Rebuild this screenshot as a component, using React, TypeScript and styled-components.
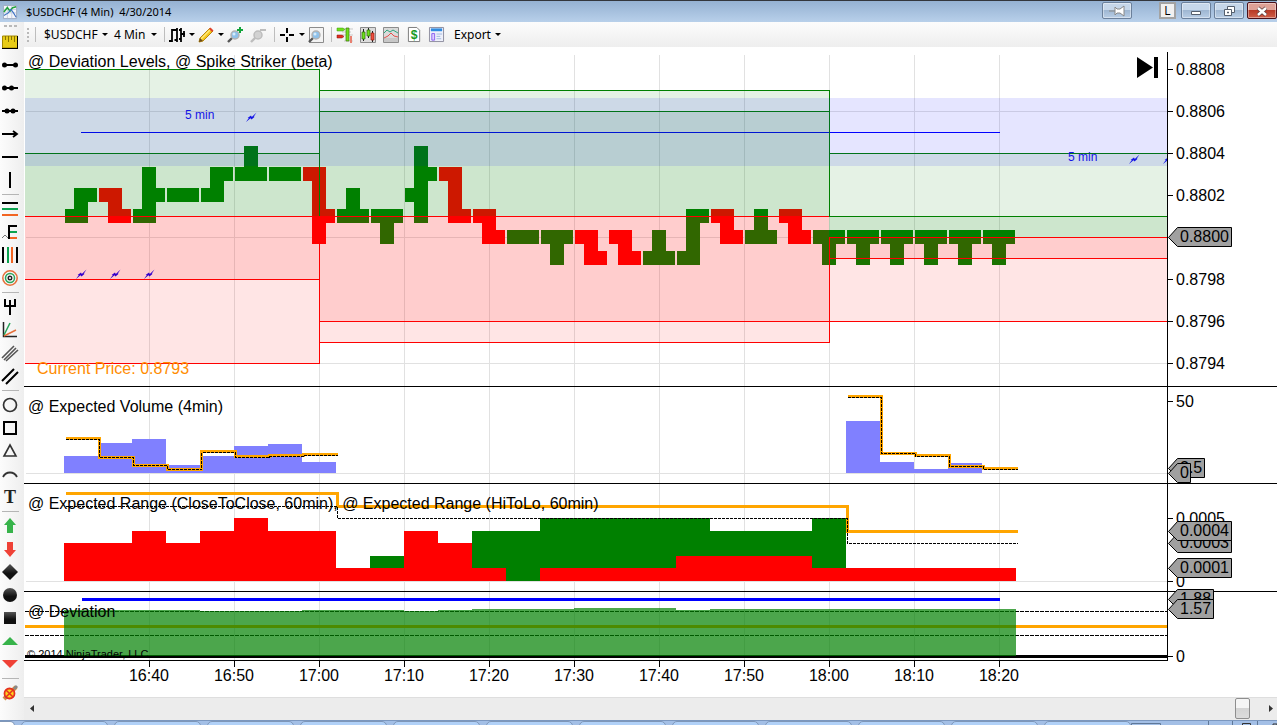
import React from "react";
import styled, { createGlobalStyle } from "styled-components";

const GlobalStyle = createGlobalStyle`
  *, *::before, *::after { box-sizing: border-box; }
  body { margin: 0; background: #fff; font-family: "Open Sans", "Noto Sans", sans-serif; font-size: 12px; color: #000; }
  button { font: inherit; color: inherit; border: 0; padding: 0; margin: 0; background: none; }
  svg { display: block; }
`;

/* ---------- window frame ---------- */

const Page = styled.div`
  display: flex;
  flex-direction: column;
  min-height: 100vh;
`;

const TitleBar = styled.header`
  display: flex;
  align-items: center;
  height: 22px;
  padding-left: 3px;
  border-top: 1px solid #33363c;
  background: linear-gradient(#95b1d2, #b8d0ea);
`;

const Title = styled.h1`
  flex: 1;
  margin: 0 0 0 9px;
  font-family: "Noto Sans", sans-serif;
  font-size: 11px;
  line-height: 20px;
  font-weight: 400;
  white-space: pre;
`;

const WindowButtons = styled.div`
  display: flex;
  gap: 3px;
  height: 21px;
  padding-top: 1px;
`;

const FrameButton = styled.button<{ $close?: boolean }>`
  display: flex;
  align-items: center;
  justify-content: center;
  width: 30px;
  height: 17px;
  border: 1px solid ${(p) => (p.$close ? "#4a1018" : "#6b809b")};
  border-radius: 2px;
  background: ${(p) =>
    p.$close
      ? "linear-gradient(#dea196 0 45%, #b83a26 50%, #cf5f49)"
      : "linear-gradient(#c6d7ea 0 45%, #9fb7d2 50%, #b9cee6)"};
  box-shadow: inset 0 0 0 1px rgba(255, 255, 255, 0.4);
`;

const LinkButton = styled.button`
  width: 17px;
  height: 17px;
  margin: 0 2px 0 24px;
  border: 2px solid #a3a3a3;
  background: #f1f1f1;
  line-height: 13px;
  text-align: center;
`;

const Body = styled.div`
  display: flex;
`;

const Main = styled.main`
  flex: 1;
  min-width: 0;
`;

/* ---------- drawing tools ---------- */

const SideBar = styled.nav`
  display: flex;
  flex-direction: column;
  flex: none;
  width: 24px;
  background: linear-gradient(90deg, #fcfcfc, #eeeeee);
`;

const SideGrip = styled.div`
  display: flex;
  gap: 2px;
  height: 8px;
  padding: 3px 0 0 4px;

  i { width: 3px; height: 2px; background: #b9b9b9; }
`;

const ToolButton = styled.button`
  display: flex;
  align-items: center;
  justify-content: center;
  width: 20px;
  height: 23px;
`;

const SideRule = styled.hr`
  width: 17px;
  height: 2px;
  margin: 2px 0 2px 2px;
  border: 0;
  border-bottom: 1px solid #b5b5b5;
`;

/* ---------- toolbar ---------- */

const ToolBar = styled.div`
  display: flex;
  align-items: center;
  height: 25px;
  padding-left: 3px;
  background: linear-gradient(#fcfcfc, #eeeeee);
`;

const Grip = styled.div`
  display: flex;
  flex-direction: column;
  gap: 2px;
  width: 8px;

  i { width: 2px; height: 2px; background: #b9b9b9; }
`;

const Rule = styled.div<{ $after: number }>`
  width: 1px;
  height: 15px;
  margin-right: ${(p) => p.$after}px;
  background: #bdbdbd;
`;

const ToolbarButton = styled.button<{ $width: number }>`
  display: flex;
  align-items: center;
  flex: none;
  gap: 4px;
  width: ${(p) => p.$width}px;
  height: 22px;
`;

const MenuButton = styled(ToolbarButton)`
  font-family: "Noto Sans", sans-serif;
  font-size: 12px;
  line-height: 20px;
  white-space: nowrap;
  justify-content: space-between;
  padding-right: 7px;
`;

/* ---------- chart ---------- */

const Panel = styled.section`
  display: flex;
  border-bottom: 1px solid #000;
`;

const LastPanel = styled(Panel)`
  border-bottom: 0;
`;

const PlotBox = styled.div`
  position: relative;
  flex: 1;
  min-width: 0;
`;

const LastPlotBox = styled(PlotBox)`
  border-bottom: 1px solid #000;
`;

const Plot = styled.svg<{ $height: number }>`
  width: 100%;
  height: ${(p) => p.$height}px;
  font-family: "Liberation Sans", Arial, sans-serif;
  font-size: 16px;
  shape-rendering: crispEdges;
`;

const AxisBox = styled.svg`
  flex: none;
  width: 110px;
  overflow: visible;
  font-family: "Liberation Sans", Arial, sans-serif;
  font-size: 16px;
  z-index: 1;
`;

const EndButton = styled.button`
  position: absolute;
  top: 10px;
  right: 9px;
`;

const ScrollBar = styled.div`
  display: flex;
  align-items: center;
  height: 23px;
  padding: 0 3px 2px 5px;
  border-top: 1px solid #dedede;
  background: #ececec;
`;

const ScrollArrow = styled.button`
  display: flex;
  align-items: center;
  justify-content: center;
  width: 6px;
  height: 20px;
`;

const Track = styled.div`
  display: flex;
  flex: 1;
  justify-content: flex-end;
  padding-right: 18px;
`;

const Thumb = styled.button`
  width: 15px;
  height: 21px;
  border: 1px solid #8e8e8e;
  border-radius: 2px;
  background: linear-gradient(#f5f5f5 0 45%, #d4d4d4 50%, #dcdcdc);
`;

const TaskBar = styled.footer`
  display: flex;
  justify-content: space-between;
  height: 5px;
  overflow: hidden;
  border-top: 1px solid #7b97bf;
  background: #a3bfe6;
`;

const TaskTabs = styled.div`
  display: flex;
  gap: 6px;
`;

const TaskTab = styled.div<{ $first?: boolean }>`
  width: ${(p) => (p.$first ? 15 : 87)}px;
  height: 12px;
  border: 1px solid #7f97b8;
  border-left-width: ${(p) => (p.$first ? 0 : 1)}px;
  border-radius: ${(p) => (p.$first ? "0 5px 0 0" : "5px 5px 0 0")};
  background: ${(p) => (p.$first ? "#fff" : "#b1d1f8")};
`;

const GREEN = "#008000";
const RED = "#ff0000";
const ORANGE = "#ffa500";
const GRID = "#e1e1e1";

/* 34px per four-minute bar, first bar (16:32) centred at 57px */
const BAR = 34;
const barX = (i: number) => 57 + BAR * i;
const TIMES = ["16:40", "16:50", "17:00", "17:10", "17:20", "17:30", "17:40", "17:50", "18:00", "18:10", "18:20"];
const timeX = (i: number) => 125 + 85 * i;
/* 21px per pip, prices held in pips */
const priceY = (p: number) => 22 + (8808 - p) * 21;

type Bar = [open: number, high: number, low: number, close: number];
const BARS: Bar[] = [
  [8801, 8802, 8801, 8802],
  [8802, 8802, 8801, 8801],
  [8801, 8803, 8801, 8802],
  [8802, 8802, 8802, 8802],
  [8802, 8803, 8802, 8803],
  [8803, 8804, 8803, 8803],
  [8803, 8803, 8803, 8803],
  [8803, 8803, 8800, 8801],
  [8801, 8802, 8801, 8801],
  [8801, 8801, 8800, 8801],
  [8802, 8804, 8801, 8803],
  [8803, 8803, 8801, 8801],
  [8801, 8801, 8800, 8800],
  [8800, 8800, 8800, 8800],
  [8800, 8800, 8799, 8800],
  [8800, 8800, 8799, 8799],
  [8800, 8800, 8799, 8799],
  [8799, 8800, 8799, 8799],
  [8799, 8801, 8799, 8801],
  [8801, 8801, 8800, 8800],
  [8800, 8801, 8800, 8800],
  [8801, 8801, 8800, 8800],
  [8800, 8800, 8799, 8800],
  [8800, 8800, 8799, 8800],
  [8800, 8800, 8799, 8800],
  [8800, 8800, 8799, 8800],
  [8800, 8800, 8799, 8800],
  [8800, 8800, 8799, 8800],
];

interface Zone {
  x: number;
  width: number | string;
  levels: [number, number, number, number, number];
}
const ZONES: Zone[] = [
  { x: 1, width: 294, levels: [8808, 8804, 8801, 8798, 8794] },
  { x: 295, width: 510, levels: [8807, 8806, 8801, 8796, 8795] },
  { x: 805, width: "100%", levels: [8804, 8801, 8800, 8799, 8796] },
];

const VerticalGrid = ({ top = 0 }: { top?: number }) => (
  <g fill={GRID}>
    {TIMES.map((t, i) => (
      <rect key={t} x={timeX(i)} y={top} width={1} height="100%" />
    ))}
  </g>
);

const Ohlc = ({ bar, x }: { bar: Bar; x: number }) => {
  const [o, h, l, c] = bar;
  return (
    <g fill={c < o ? RED : GREEN}>
      <rect x={x - 16} y={priceY(o) - 7} width={9} height={14} />
      <rect x={x - 7} y={priceY(h) - 7} width={14} height={priceY(l) - priceY(h) + 14} />
      <rect x={x + 7} y={priceY(c) - 7} width={9} height={14} />
    </g>
  );
};

const ZoneShade = ({ zone }: { zone: Zone }) => {
  const y = zone.levels.map(priceY);
  const bands: [number, number, string][] = [
    [y[0], y[2], GREEN],
    [y[1], y[2], GREEN],
    [y[2], y[3], RED],
    [y[2], y[4], RED],
  ];
  return (
    <g>
      {bands.map(([a, b, c], i) => (
        <rect key={i} x={zone.x} y={a} width={zone.width} height={b - a} fill={c} fillOpacity={0.1} />
      ))}
      {y.map((v, i) => (
        <rect key={v} x={zone.x} y={v} width={zone.width} height={1} fill={i < 2 ? GREEN : RED} />
      ))}
    </g>
  );
};

const Bolt = ({ x, y, color = "#1414e6" }: { x: number; y: number; color?: string }) => (
  <path
    d={`M${x - 5} ${y + 5}l2.800-4h-1.200l3.400-2.500.8 1.500 4.700-4.500-2.800 4.300h1l-3.200 2.700-1-1.200z`}
    fill={color}
    shapeRendering="auto"
  />
);

const PricePanel = () => (
  <Panel>
    <PlotBox>
      <Plot $height={339} role="img" aria-label="Price">
        <VerticalGrid top={8} />
        {[8806, 8800, 8794].map((p) => (
          <rect key={p} x={2} y={priceY(p)} width="100%" height={1} fill={GRID} />
        ))}
        <rect x={57} y={85} width={919} height={1} fill="#0000ff" />
        {BARS.map((b, i) => (
          <Ohlc key={i} bar={b} x={barX(i)} />
        ))}
        {ZONES.map((z) => (
          <ZoneShade key={z.x} zone={z} />
        ))}
        <rect x={295} y={22} width={1} height={147} fill={GREEN} />
        <rect x={295} y={169} width={1} height={148} fill={RED} />
        <rect x={805} y={43} width={1} height={126} fill={GREEN} />
        <rect x={805} y={190} width={1} height={106} fill={RED} />
        <rect x={1} y={51} width="100%" height={68} fill="#0000ff" fillOpacity={0.1} />
        <text x={161} y={72} fontSize={12} fill="#1414e6">5 min</text>
        <text x={1044} y={114} fontSize={12} fill="#1414e6">5 min</text>
        <Bolt x={227} y={70} />
        <Bolt x={1110} y={112} />
        <Bolt x={1144} y={112} />
        {[0, 1, 2].map((i) => (
          <Bolt key={i} x={barX(i)} y={227} color="#3300cc" />
        ))}
        <text x={13} y={327} fill="#ff8c00">Current Price: 0.8793</text>
        <text x={4} y={20}>@ Deviation Levels, @ Spike Striker (beta)</text>
      </Plot>
      <EndButton aria-label="Go to last bar">
        <svg width={21} height={21}>
          <path d="M0 0l16 10.500-16 10.500zM17 0h4v21h-4z" />
        </svg>
      </EndButton>
    </PlotBox>
    <Axis
      height={339}
      top={5}
      labels={[8808, 8806, 8804, 8802, 8798, 8796, 8794].map((p) => [priceY(p), `0.${p}`])}
      tags={[[priceY(8800), "0.8800", 64]]}
    />
  </Panel>
);

interface AxisProps {
  height: number;
  top?: number;
  labels: [number, string][];
  tags: [number, string, number][];
}
const Axis = ({ height, top = 0, labels, tags }: AxisProps) => (
  <AxisBox height={height}>
    <rect x={0} y={top} width={1} height={height - top} />
    {labels.map(([y, t]) => (
      <g key={t}>
        <rect x={0} y={y} width={6} height={1} />
        <text x={9} y={y + 6}>{t}</text>
      </g>
    ))}
    {tags.map(([y, t, w]) => (
      <g key={t}>
        <path d={`M1.500 ${y + 0.5}l9-10H${w + 0.5}v19H10.500z`} fill="#a0a0a0" stroke="#000" />
        <text x={13} y={y + 5}>{t}</text>
      </g>
    ))}
  </AxisBox>
);

/* A stepped line: one level per bar, starting at x */
const steps = (x: number, levels: number[], w = BAR) =>
  levels.map((y, i) => `${i ? "V" : `M${x} `}${y}H${x + w * (i + 1)}`).join("");

const StepLines = ({ thick, dashed }: { thick: string; dashed: string }) => (
  <g fill="none" transform="translate(0.5 0.5)">
    <path d={thick} stroke={ORANGE} strokeWidth={3} />
    <path d={dashed} stroke="#000" strokeDasharray="3 1" />
  </g>
);

const VOLUMES: [number, number][] = [
  [0, 17], [1, 30], [2, 34], [3, 8], [4, 17], [5, 27], [6, 29], [7, 11],
  [23, 52], [24, 11], [25, 4], [26, 10],
];

const VolumePanel = () => (
  <Panel>
    <PlotBox>
      <Plot $height={96} role="img" aria-label="Expected volume">
        <VerticalGrid />
        <rect x={2} y={86} width="100%" height={1} fill={GRID} />
        {VOLUMES.map(([i, h]) => (
          <rect key={i} x={barX(i) - 17} y={86 - h} width={BAR} height={h} fill="#8080ff" />
        ))}
        <StepLines
          thick={steps(41, [51, 70, 78, 82, 64, 69, 68, 67]) + steps(823, [9, 66, 68, 79, 81])}
          dashed={steps(41, [52, 70, 78, 82, 65, 70, 69, 68]) + steps(823, [10, 66, 69, 79, 82])}
        />
        <text x={4} y={25}>@ Expected Volume (4min)</text>
      </Plot>
    </PlotBox>
    <Axis height={96} labels={[[14, "50"]]} tags={[[81, "2.5", 37], [86, "0", 23]]} />
  </Panel>
);

/* Range panel bars, in pips: [first bar, bar count, pips] */
const RANGE_GREEN = [[9, 1, 2], [12, 2, 4], [14, 5, 5], [19, 3, 4], [22, 1, 5]];
const RANGE_RED = [
  [0, 2, 3], [2, 1, 4], [3, 1, 3], [4, 1, 4], [5, 1, 5], [6, 2, 4], [8, 2, 1], [10, 1, 4],
  [11, 1, 3], [12, 1, 1], [14, 4, 1], [18, 4, 2], [22, 6, 1],
];
const rangeY = (v: number) => Math.floor(97 - v * 12.5);

const RangeBars = ({ data, fill }: { data: number[][]; fill: string }) => (
  <g fill={fill}>
    {data.map(([i, n, v]) => (
      <rect key={i} x={barX(i) - 17} y={rangeY(v)} width={n * BAR} height={97 - rangeY(v)} />
    ))}
  </g>
);

const RangePanel = () => (
  <Panel>
    <PlotBox>
      <Plot $height={107} role="img" aria-label="Expected range">
        <VerticalGrid />
        <rect x={2} y={97} width="100%" height={1} fill={GRID} />
        <RangeBars data={RANGE_GREEN} fill={GREEN} />
        <RangeBars data={RANGE_RED} fill={RED} />
        <StepLines thick="M41 9H313V22H823V47H993" dashed="M41 22H313V34H823V59H993" />
        <text x={4} y={25}>@ Expected Range (CloseToClose, 60min), @ Expected Range (HiToLo, 60min)</text>
      </Plot>
    </PlotBox>
    <Axis
      height={107}
      labels={[[34, "0.0005"], [97, "0"]]}
      tags={[[59, "0.0003", 64], [47, "0.0004", 64], [84, "0.0001", 64]]}
    />
  </Panel>
);

const DEVIATIONS = [
  [0, 4, 18], [4, 3, 19], [7, 3, 18], [10, 1, 19], [11, 1, 18], [12, 3, 17], [15, 3, 16],
  [18, 1, 18], [19, 9, 17],
];

const DeviationPanel = () => (
  <LastPanel>
    <LastPlotBox>
      <Plot $height={68} role="img" aria-label="Deviation">
        <VerticalGrid />
        <g stroke="#000" strokeDasharray="4 1" transform="translate(0 0.5)">
          <line x1={1} x2="100%" y1={19} y2={19} />
          <line x1={1} x2="100%" y1={43} y2={43} />
        </g>
        <rect x={1} y={33} width="100%" height={3} fill={ORANGE} />
        <rect x={1} y={63} width="100%" height={3} />
        <g fill={GREEN} fillOpacity={0.7}>
          {DEVIATIONS.map(([i, n, y]) => (
            <rect key={i} x={barX(i) - 17} y={y} width={n * BAR} height={64 - y} />
          ))}
        </g>
        <rect x={58} y={6} width={918} height={3} fill="#0000ff" />
        <text x={3} y={66} fontSize={11}>© 2014 NinjaTrader, LLC</text>
        <text x={4} y={25}>@ Deviation</text>
      </Plot>
    </LastPlotBox>
    <Axis height={69} labels={[[64, "0"]]} tags={[[7, "1.88", 46], [17, "1.57", 46]]} />
  </LastPanel>
);

const TimeAxis = () => (
  <Plot $height={36} role="img" aria-label="Time">
    {TIMES.map((t, i) => (
      <g key={t}>
        <rect x={timeX(i)} y={0} width={1} height={6} />
        <text x={timeX(i)} y={20} textAnchor="middle">{t}</text>
      </g>
    ))}
  </Plot>
);

/* ---------- icons ---------- */

const IconBox = styled.svg`
  flex: none;
  overflow: visible;
`;

const Icon = ({ children, size = 16 }: { children: React.ReactNode; size?: number }) => (
  <IconBox width={size} height={size} viewBox="0 0 16 16" fill="none" aria-hidden="true">
    {children}
  </IconBox>
);

const Caret = () => (
  <IconBox width={6} height={3} aria-hidden="true">
    <path d="M0 0h6L3 3z" />
  </IconBox>
);

const Lens = ({ gray }: { gray?: boolean }) => (
  <>
    <path d="M1 15l5-5" stroke={gray ? "#bdbdbd" : "#555"} strokeWidth={2.4} />
    <circle cx={8} cy={8} r={4} fill={gray ? "#d2d2d2" : "#8fc1ea"} stroke={gray ? "#bdbdbd" : "#b3b3b3"} strokeWidth={1.5} />
    {!gray && <circle cx={7} cy={7} r={1.5} fill="#d5ebfb" />}
  </>
);

const TOOLS: [string, React.ReactNode][] = [
  ["Ruler", <><path d="M.5 2h15v12H.5z" fill="#e8cc18" stroke="#a58a00" /><path d="M0 14.500h16M15.500 2v13" stroke="#000" /><path d="M3.500 2v4M6.500 2v6M9.500 2v4M12.500 2v6" stroke="#8a7400" /></>],
  ["Line", <><path d="M2 8h12" stroke="#000" strokeWidth={2} /><circle cx={2.500} cy={8} r={2.500} fill="#000" /><circle cx={13.500} cy={8} r={2.500} fill="#000" /></>],
  ["Ray", <><path d="M2 8h14" stroke="#000" strokeWidth={2} /><circle cx={2.500} cy={8} r={2.500} fill="#000" /><circle cx={9.500} cy={8} r={2.500} fill="#000" /></>],
  ["Extended line", <><path d="M0 8h16" stroke="#000" strokeWidth={2} /><circle cx={5} cy={8} r={2.500} fill="#000" /><circle cx={11} cy={8} r={2.500} fill="#000" /></>],
  ["Arrow line", <path d="M0 8h15M11 5l4 3-4 3" stroke="#000" strokeWidth={1.800} />],
  ["Horizontal line", <path d="M0 8h16" stroke="#000" strokeWidth={2} />],
  ["Vertical line", <path d="M8 0v16" stroke="#000" strokeWidth={2} />],
  ["", null],
  ["Fibonacci retracements", <><path d="M0 2h16" stroke="#000" strokeWidth={2} /><path d="M0 8h16" stroke="#0ca350" strokeWidth={2} /><path d="M0 14h16" stroke="#f26522" strokeWidth={2} /></>],
  ["Fibonacci extensions", <><path d="M15 2H7v13" stroke="#000" strokeWidth={2} /><path d="M8 8h7" stroke="#0ca350" strokeWidth={2} /><path d="M8 14h7" stroke="#f26522" strokeWidth={2} /><path d="M0 14l3-3 3 3" stroke="#777" /></>],
  ["Fibonacci time", <><path d="M1 0v16M15 0v16" stroke="#000" strokeWidth={2} /><path d="M6 0v16" stroke="#0ca350" strokeWidth={2} /><path d="M10 0v16" stroke="#f26522" strokeWidth={2} /></>],
  ["Fibonacci circle", <><circle cx={8} cy={8} r={7.200} stroke="#e5703b" strokeWidth={1.500} /><circle cx={8} cy={8} r={4.500} stroke="#2aa55c" strokeWidth={1.500} /><circle cx={8} cy={8} r={1.800} stroke="#222" strokeWidth={1.400} /></>],
  ["", null],
  ["Andrews pitchfork", <path d="M3 0v7h10V0M8 1v15" stroke="#000" strokeWidth={2} />],
  ["Gann fan", <><path d="M1.500 0v14.500H15" stroke="#222" strokeWidth={1.500} /><path d="M2 13L8 1" stroke="#2aa55c" strokeWidth={1.500} /><path d="M2 14l12-6" stroke="#e5703b" strokeWidth={1.500} /></>],
  ["Regression channel", <path d="M0 13L12 1M2 15L14 3M4 16L16 5" stroke="#555" strokeWidth={1.600} />],
  ["Trend channel", <path d="M0 13L12 1M4 16L16 4" stroke="#000" strokeWidth={2} />],
  ["", null],
  ["Ellipse", <circle cx={8} cy={8} r={6.500} stroke="#333" strokeWidth={1.700} />],
  ["Rectangle", <path d="M2 2h12v12H2z" stroke="#000" strokeWidth={2} />],
  ["Triangle", <path d="M8 2l6 11H2z" stroke="#333" strokeWidth={1.600} />],
  ["Arc", <path d="M1 11c3-6 11-6 14 0" stroke="#333" strokeWidth={1.800} />],
  ["Text", <text x={8} y={14} textAnchor="middle" fill="#222" fontFamily="Liberation Serif, serif" fontWeight={700} fontSize={18}>T</text>],
  ["", null],
  ["Arrow up", <path d="M8 0l6 7h-3v8H5V7H2z" fill="#37b34a" />],
  ["Arrow down", <path d="M8 16L2 9h3V1h6v8h3z" fill="#ef4136" />],
  ["Diamond", <path d="M8 0l8 8-8 8-8-8z" fill="url(#dark)" />],
  ["Dot", <circle cx={8} cy={8} r={7} fill="url(#dark)" />],
  ["Square", <path d="M2 2h12v12H2z" fill="url(#dark)" />],
  ["Triangle up", <path d="M8 4l8 8H0z" fill="#37b34a" />],
  ["Triangle down", <path d="M0 4h16l-8 8z" fill="#ef4136" />],
  ["", null],
  ["Remove drawing objects", <><path d="M2 14L14 2" stroke="#d98b3a" strokeWidth={4} /><path d="M3 13l2-2M12 4l3-3" stroke="#888" strokeWidth={3} /><circle cx={7.500} cy={8.500} r={5} fill="#ffd21c" stroke="#e5301f" strokeWidth={1.800} /><path d="M4 5l7 7M11 5l-7 7" stroke="#e5301f" strokeWidth={1.500} /></>],
];

const Defs = styled.svg`
  position: absolute;
`;

const DrawingTools = () => (
  <SideBar aria-label="Drawing tools">
    <Defs width={0} height={0} aria-hidden="true">
      <linearGradient id="dark" x2="0" y2="1">
        <stop stopColor="#555" />
        <stop offset="0.6" stopColor="#111" />
      </linearGradient>
    </Defs>
    <SideGrip><i /><i /><i /></SideGrip>
    {TOOLS.map(([name, drawing], i) =>
      name ? (
        <ToolButton key={name} aria-label={name}><Icon>{drawing}</Icon></ToolButton>
      ) : (
        <SideRule key={i} />
      )
    )}
  </SideBar>
);

const ChartToolBar = () => (
  <ToolBar>
    <Grip><i /><i /><i /><i /></Grip>
    <Rule $after={8} />
    <MenuButton $width={70}>$USDCHF<Caret /></MenuButton>
    <MenuButton $width={50}>4 Min<Caret /></MenuButton>
    <Rule $after={4} />
    <ToolbarButton $width={29} aria-label="Chart style">
      <Icon><path d="M3 2v13M0 14h3M3 3h5M8 1v14M5.500 13H8M12 1v14M10 3h2M12 12h-2M12 7h4M15 4v6" stroke="#000" strokeWidth={1.800} /></Icon>
      <Caret />
    </ToolbarButton>
    <ToolbarButton $width={29} aria-label="Draw">
      <Icon>
        <path d="M1 15l1-4L12 1l3 3L5 14z" fill="#f6c71b" stroke="#b98a12" />
        <path d="M3 12L13 2" stroke="#ffe97a" strokeWidth={1.400} />
        <path d="M11 2l3 3 1.500-1.500-3-3z" fill="#e0432c" />
        <path d="M1 15l1-4 3 3z" fill="#6b4a1b" />
      </Icon>
      <Caret />
    </ToolbarButton>
    <ToolbarButton $width={23} aria-label="Zoom in">
      <Icon><Lens /><path d="M13 0v6M10 3h6" stroke="#12a53a" strokeWidth={2} /></Icon>
    </ToolbarButton>
    <ToolbarButton $width={24} aria-label="Zoom out">
      <Icon><Lens gray /><path d="M10 3h6" stroke="#bdbdbd" strokeWidth={2} /></Icon>
    </ToolbarButton>
    <Rule $after={4} />
    <ToolbarButton $width={29} aria-label="Cross hair">
      <Icon><path d="M8 1v5M8 10v5M1 8h5M10 8h5" stroke="#000" strokeWidth={2} /></Icon>
      <Caret />
    </ToolbarButton>
    <ToolbarButton $width={23} aria-label="Zoom window">
      <Icon><path d="M1.500.5h14v15h-14z" fill="#f3f3f3" stroke="#8c8c8c" /><Lens /></Icon>
    </ToolbarButton>
    <Rule $after={5} />
    <ToolbarButton $width={23} aria-label="Chart trader">
      <Icon>
        <path d="M5 2h11M5 5h9M5 8h11M7 14h9" stroke="#c9c9c9" />
        <path d="M0 1h6l2 1.500L6 4H0z" fill="#6fe01c" stroke="#3f9a0b" strokeWidth={0.500} />
        <path d="M0 8h5l2 1.500L5 11H0z" fill="#e02f22" stroke="#8a1109" strokeWidth={0.500} />
        <path d="M9 1h3v13H9z" fill="#6fe01c" stroke="#3f7a0b" strokeWidth={0.700} />
        <path d="M13 9h2v7h-2z" fill="#e88070" />
      </Icon>
    </ToolbarButton>
    <ToolbarButton $width={23} aria-label="Data box">
      <Icon>
        <path d="M.5.5h15v15H.5z" fill="#dcdcdc" stroke="#8c8c8c" />
        <path d="M3.500 2v12M8.500 1v10M12.500 4v11" stroke="#222" />
        <path d="M2 5h3v7H2zM7 3h3v6H7z" fill="#6fe01c" stroke="#2d6a0b" strokeWidth={0.700} />
        <path d="M11 6h3v7h-3z" fill="#ef5040" stroke="#9a1a0b" strokeWidth={0.700} />
      </Icon>
    </ToolbarButton>
    <ToolbarButton $width={24} aria-label="Indicators">
      <Icon>
        <path d="M.5.5h15v15H.5z" fill="#dadada" stroke="#8c8c8c" />
        <path d="M1 12h14M1 14h14" stroke="#b5b5b5" />
        <path d="M1 6l3-3 3 2 3-2 5 3" stroke="#2aa57c" />
        <path d="M1 11l4-2 3-3 3 3 4 1" stroke="#e5504a" />
      </Icon>
    </ToolbarButton>
    <ToolbarButton $width={22} aria-label="Strategies">
      <Icon size={15}>
        <path d="M1.500.5h9l3 3v12h-12z" fill="#fff" stroke="#777" />
        <text x={7.500} y={13} textAnchor="middle" fill="#149a1e" fontFamily="Liberation Sans, sans-serif" fontWeight={700} fontSize={13}>$</text>
      </Icon>
    </ToolbarButton>
    <ToolbarButton $width={25} aria-label="Properties">
      <Icon size={15}>
        <path d="M.5.5h15v15H.5z" fill="#eef0fb" stroke="#8c8c9c" />
        <path d="M2 3h12" stroke="#2f8be0" strokeWidth={3} />
        <path d="M3 7h3v7H3z" fill="#dcd0ff" stroke="#8a5cf0" />
        <path d="M8 7.500h6M8 10h4M8 12.500h5" stroke="#9fb6dd" />
      </Icon>
    </ToolbarButton>
    <MenuButton $width={53}>Export<Caret /></MenuButton>
  </ToolBar>
);

const WindowTitle = () => (
  <TitleBar>
    <Icon size={14}>
      <path d="M.5.5h15v15H.5z" fill="#f4f6fb" stroke="#9aa7bd" />
      <path d="M1 5h14M1 9h14M5 1v14M10 1v14" stroke="#c3cbe0" />
      <path d="M1 8l4-5 3 4 3-4 4-1" stroke="#22a33a" strokeWidth={1.800} />
      <path d="M1 12l5-3 3-4 3 4 3 5" stroke="#3f74c4" strokeWidth={1.300} />
    </Icon>
    <Title>{"$USDCHF (4 Min)  4/30/2014"}</Title>
    <WindowButtons>
      <FrameButton aria-label="Keep on top">
        <svg width={18} height={14} aria-hidden="true">
          <path d="M1 7h6M7 3l2 2h3l4-3v10l-4-3H9l-2 2z" fill="#fff" stroke="#888" />
        </svg>
      </FrameButton>
      <LinkButton aria-label="Link">L</LinkButton>
      <FrameButton aria-label="Minimize">
        <svg width={12} height={12} aria-hidden="true"><path d="M1.500 6.500h9v3h-9z" fill="#fff" stroke="#555f6d" /></svg>
      </FrameButton>
      <FrameButton aria-label="Restore">
        <svg width={12} height={12} aria-hidden="true" fill="#fff" stroke="#555f6d">
          <path d="M4.500 1.500h7v6h-7z" /><path d="M1.500 4.500h7v6h-7z" /><path d="M4.500 7h1v1h-1z" />
        </svg>
      </FrameButton>
      <FrameButton aria-label="Close" $close>
        <svg width={12} height={12} aria-hidden="true">
          <path d="M2 3l8 7M10 3l-8 7" stroke="#5a3a3a" strokeWidth={4} />
          <path d="M2 3l8 7M10 3l-8 7" stroke="#fff" strokeWidth={2.500} />
        </svg>
      </FrameButton>
    </WindowButtons>
  </TitleBar>
);

export default function App() {
  return (
    <Page>
      <GlobalStyle />
      <WindowTitle />
      <Body>
        <DrawingTools />
        <Main>
          <ChartToolBar />
          <PricePanel />
          <VolumePanel />
          <RangePanel />
          <DeviationPanel />
          <TimeAxis />
          <ScrollBar>
            <ScrollArrow aria-label="Scroll left"><svg width={4} height={7}><path d="M4 0v7L0 3.500z" fill="#333" /></svg></ScrollArrow>
            <Track><Thumb aria-label="Scroll position" /></Track>
            <ScrollArrow aria-label="Scroll right"><svg width={4} height={7}><path d="M0 0v7l4-3.500z" fill="#333" /></svg></ScrollArrow>
          </ScrollBar>
        </Main>
      </Body>
      <TaskBar>
        <TaskTabs>
          <TaskTab $first />
          {Array.from({ length: 12 }, (_, i) => (
            <TaskTab key={i} />
          ))}
        </TaskTabs>
        <svg width={170} height={5} fill="none" stroke="#5f7898" aria-hidden="true">
          <path d="M.5 5V2.500h29V5M77.500 0v5M101.500 0v5M126.500 0v5M168.500 0v5" />
          <path d="M111.500 5V2.500h8V5" stroke="#333" />
          <path d="M142 5V3h4v2M149 5V3h4v2" stroke="#333" />
        </svg>
      </TaskBar>
    </Page>
  );
}
